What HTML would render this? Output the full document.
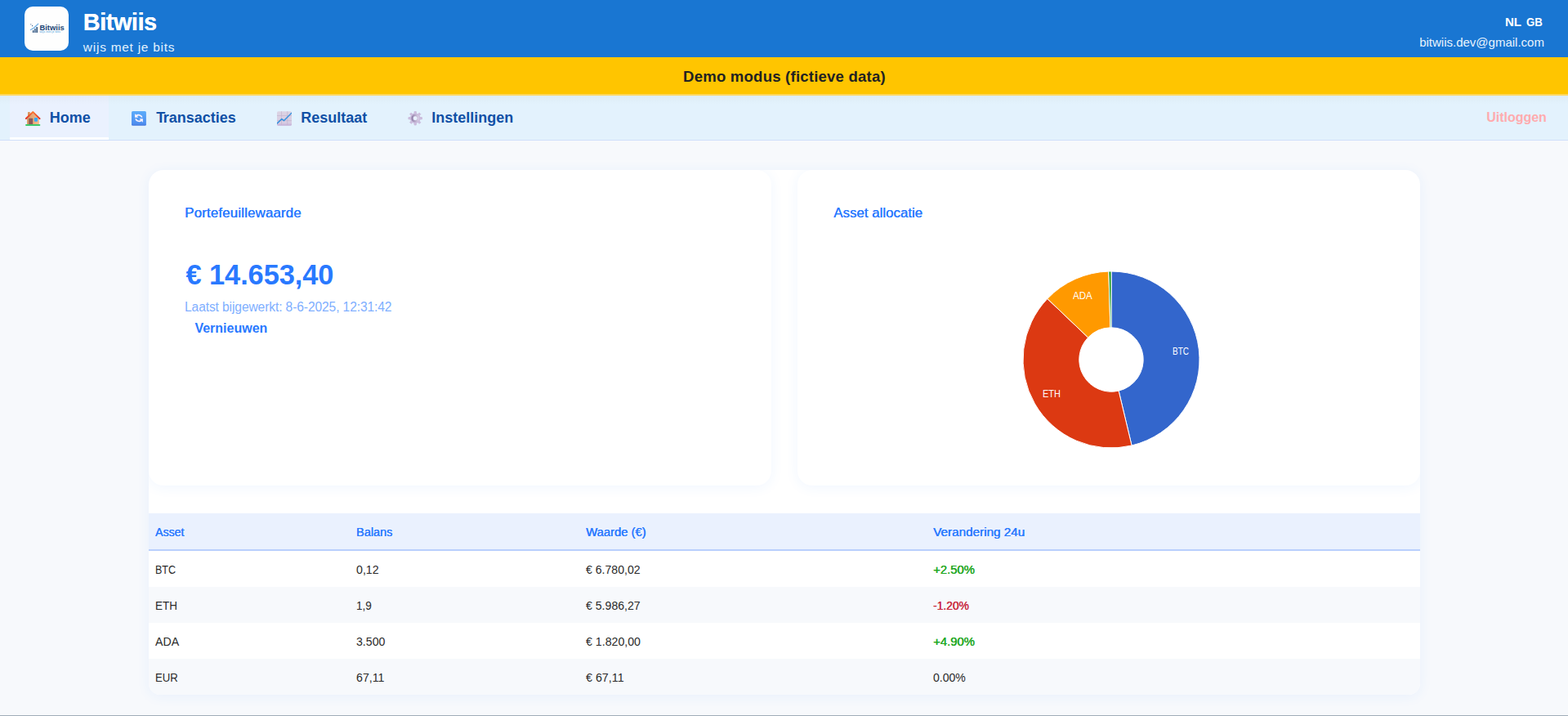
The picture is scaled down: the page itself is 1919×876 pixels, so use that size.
<!DOCTYPE html>
<html lang="nl">
<head>
<meta charset="utf-8">
<title>Bitwiis</title>
<style>
*{box-sizing:border-box}
html,body{margin:0;padding:0}
body{width:1919px;height:876px;overflow:hidden;background:#f7f9fc;font-family:"Liberation Sans",sans-serif;color:#222;position:relative}
.t{position:absolute;white-space:nowrap;line-height:1;margin:0;padding:0}
header{position:absolute;left:0;top:0;width:1919px;height:70px;background:#1976d2}
.logo{position:absolute;left:30px;top:8px;width:54px;height:54px;border-radius:10px;background:#fefefe;overflow:hidden}
.banner{position:absolute;left:0;top:70px;width:1919px;height:47px;background:#ffc500;border-bottom:2px solid #ffd75e}
nav{position:absolute;left:0;top:117px;width:1919px;height:55px;background:#e3f2fd linear-gradient(to bottom,rgba(90,80,40,.03),rgba(90,80,40,0) 11px);border-bottom:1px solid #d0dffa}
nav .active{position:absolute;left:12px;top:0;width:121px;height:54px;background:#eaf1fe linear-gradient(to bottom,rgba(90,80,40,.03),rgba(90,80,40,0) 11px);border-bottom:3px solid #fff}
nav .t{font-weight:bold;font-size:18px;color:#1050a6}
.wrap{position:absolute;left:182px;top:208px;width:1556px;height:642px;background:#fff;border-radius:18px 18px 14px 14px;box-shadow:0 2px 16px rgba(41,121,255,.07);overflow:hidden}
.card{position:absolute;top:0;width:762px;height:386px;background:#fff;border-radius:18px;box-shadow:0 2px 16px rgba(41,121,255,.07)}
.blue{color:#2979ff}
table{position:absolute;left:182px;top:628px;width:1556px;border-collapse:separate;border-spacing:0;table-layout:fixed;font-size:15.5px;border-radius:0 0 14px 14px;overflow:hidden}
th,td{height:44px;padding:14px 0 0 8px;text-align:left;vertical-align:top;line-height:18px;white-space:nowrap}
th{background:#eaf1fe;color:#2979ff;font-weight:normal;border-bottom:2px solid #b9cffd;height:46px}
th:nth-child(1){width:246px}th:nth-child(2){width:281px}th:nth-child(3){width:425px}
td{color:#2a2a2a}
tbody tr:nth-child(even) td{background:#f7f9fc}
.pos{color:#22a722}.neg{color:#c9283e}
.sx{display:inline-block;transform-origin:0 50%}
.pl{font-size:12px;color:#fff}
.sb{text-shadow:.4px 0 0 currentColor}
th,.pos,.neg{text-shadow:.4px 0 0 currentColor}
.ic{position:absolute;top:13px}
.bottomline{position:absolute;left:0;top:875px;width:1919px;height:1px;background:#a0adb8}
</style>
</head>
<body>
<header>
  <div class="logo">
    <svg width="54" height="54" viewBox="30 8 54 54" style="display:block">
      <path d="M37.4,36.5L42.2,33.6L46.7,29.3" fill="none" stroke="#7ab6e8" stroke-width="1.4" stroke-linecap="round"/>
      <rect x="40" y="37.1" width="1.3" height="2.9" fill="#1f4775"/>
      <rect x="42.2" y="35" width="1.4" height="5" fill="#2a5283"/>
      <rect x="44.5" y="33" width="1.4" height="7" fill="#173e6c"/>
      <rect x="37.3" y="29.3" width="1" height="1" fill="#3b5f8c"/>
      <rect x="39" y="31" width="1.1" height="1.1" fill="#2c5282"/>
      <text id="lg1" x="48.5" y="36.7" font-family="Liberation Sans, sans-serif" font-weight="bold" font-size="9.4" fill="#1d4574" textLength="30.2" lengthAdjust="spacingAndGlyphs">Bitwiis</text>
      <text id="lg2" x="48.4" y="40.1" font-family="Liberation Sans, sans-serif" font-weight="bold" font-size="3.3" fill="#7fb8e6" textLength="25.6" lengthAdjust="spacingAndGlyphs">wijs met je bits</text>
    </svg>
  </div>
  <h1 class="t" id="title" style="left:101.77px;top:12.7px;font-size:28.6px;font-weight:bold;color:#fff;letter-spacing:-0.332px;text-shadow:.3px 0 0 #fff">Bitwiis</h1>
  <div class="t" id="sub" style="left:101.86px;top:50px;font-size:15.4px;color:#e3f2fd;letter-spacing:0.772px">wijs met je bits</div>
  <span class="t sx" id="lang1" style="left:1842.3px;top:19.5px;font-size:14.6px;font-weight:bold;color:#fff;transform:scaleX(1.03)">NL</span>
  <span class="t sx" id="lang2" style="left:1868.2px;top:19.5px;font-size:14.6px;font-weight:bold;color:#fff;transform:scaleX(0.905)">GB</span>
  <div class="t" id="email" style="left:1737.16px;top:44px;font-size:15px;color:#e8f3fd">bitwiis.dev@gmail.com</div>
</header>
<div class="banner"><div class="t" id="demo" style="left:836.07px;top:15.2px;font-size:18.6px;font-weight:bold;color:#222;letter-spacing:0.192px">Demo modus (fictieve data)</div></div>
<nav>
  <div class="active"></div>
  <svg class="ic" style="left:26px" width="30" height="30" viewBox="0 0 30 30" aria-hidden="true">
    <defs>
      <linearGradient id="roof" x1="0" y1="0" x2="0" y2="1"><stop offset="0" stop-color="#fb7a2e"/><stop offset="1" stop-color="#de3128"/></linearGradient>
      <linearGradient id="wall" x1="0" y1="0" x2="1" y2="0"><stop offset="0" stop-color="#d99a63"/><stop offset="1" stop-color="#f4bd90"/></linearGradient>
    </defs>
    <rect x="8" y="6.9" width="2.8" height="6" rx=".5" fill="#d8955c"/>
    <path d="M7,15.2L14.4,8.3L21.9,15.2V22H7Z" fill="url(#wall)"/>
    <rect x="9.2" y="14.8" width="5" height="7.1" rx=".5" fill="#8c5b59"/>
    <rect x="15.9" y="14" width="4.1" height="4.8" rx=".8" fill="#35aaf6"/>
    <path d="M5.9,15.1L14.4,7.1L22.6,15.1" fill="none" stroke="url(#roof)" stroke-width="2" stroke-linecap="round" stroke-linejoin="round"/>
    <rect x="5.1" y="21.9" width="18.2" height="2.1" rx=".9" fill="#3dc96b"/>
  </svg>
  <svg class="ic" style="left:155px" width="30" height="30" viewBox="0 0 30 30" aria-hidden="true">
    <defs><linearGradient id="rf" x1="0" y1="0" x2="0" y2="1"><stop offset="0" stop-color="#5cacfa"/><stop offset=".85" stop-color="#4f8ff0"/><stop offset="1" stop-color="#4577dc"/></linearGradient></defs>
    <rect x="6" y="6" width="17.9" height="17.8" rx="1.6" fill="url(#rf)"/>
    <path d="M10,13.7V9.2L11.6,10.6A5.4,5.4 0 0 1 19.6,13.6L17.9,13.7A3.6,3.6 0 0 0 12.9,11.9L14.2,13.7Z" fill="#fbf2fd"/>
    <path d="M19.9,15.2V19.7L18.3,18.3A5.4,5.4 0 0 1 10.2,15.4L11.9,15.3A3.6,3.6 0 0 0 17,17L15.6,15.2Z" fill="#fbf2fd"/>
  </svg>
  <svg class="ic" style="left:333px" width="30" height="30" viewBox="0 0 30 30" aria-hidden="true">
    <defs><linearGradient id="ch" x1="0" y1="0" x2="0" y2="1"><stop offset="0" stop-color="#dbd3e3"/><stop offset=".8" stop-color="#d8cde3"/><stop offset="1" stop-color="#c3add6"/></linearGradient>
    <clipPath id="chc"><rect x="6" y="6.2" width="18" height="17.6" rx="1.6"/></clipPath></defs>
    <rect x="6" y="6.2" width="18" height="17.6" rx="1.6" fill="url(#ch)"/>
    <g clip-path="url(#chc)">
      <path d="M11.5,6V23M18.7,6V23M6,11.5H24M6,17.6H24" stroke="#c4b4cf" stroke-width=".7" fill="none"/>
      <path d="M6.2,20.9L11.8,15.6L14.6,17.6L23.6,8.4" stroke="#3391df" stroke-width="1.5" fill="none" stroke-linecap="round" stroke-linejoin="round"/>
    </g>
  </svg>
  <svg class="ic" style="left:493px" width="30" height="30" viewBox="0 0 30 30" aria-hidden="true">
    <defs><linearGradient id="gr" x1="0" y1="0" x2="1" y2="0"><stop offset="0" stop-color="#9686ad"/><stop offset="1" stop-color="#d6cbe3"/></linearGradient></defs>
    <path d="M13.99,8.93L14.13,6.47L16.27,6.47L16.41,8.93L18.42,9.76L20.26,8.12L21.78,9.64L20.14,11.48L20.97,13.49L23.43,13.63L23.43,15.77L20.97,15.91L20.14,17.92L21.78,19.76L20.26,21.28L18.42,19.64L16.41,20.47L16.27,22.93L14.13,22.93L13.99,20.47L11.98,19.64L10.14,21.28L8.62,19.76L10.26,17.92L9.43,15.91L6.97,15.77L6.97,13.63L9.43,13.49L10.26,11.48L8.62,9.64L10.14,8.12L11.98,9.76Z" fill="#cbbcdd" stroke="#cbbcdd" stroke-width="1" stroke-linejoin="round"/>
    <circle cx="15.2" cy="14.7" r="3.7" fill="none" stroke="url(#gr)" stroke-width="2.4"/>
    <circle cx="15.2" cy="14.7" r="2.4" fill="#e9f1fd"/>
  </svg>

  <a class="t" id="n1" style="left:60.65px;top:18px">Home</a>
  <a class="t" id="n2" style="left:191.2px;top:18px"><span style="letter-spacing:-2.5px">T</span>ransacties</a>
  <a class="t" id="n3" style="left:368.29px;top:18px">Resultaat</a>
  <a class="t" id="n4" style="left:528.27px;top:18px">Instellingen</a>
  <a class="t" id="n5" style="left:1819.14px;top:19.4px;font-size:16px;color:#ffabae">Uitloggen</a>
</nav>
<div class="wrap">
<section class="card" style="left:0">
  <h2 class="t blue sb" id="c1" style="left:44.11px;top:44.6px;font-size:16.8px;font-weight:normal;letter-spacing:0.199px">Portefeuillewaarde</h2>
  <div class="t blue" id="val" style="left:45.48px;top:110.8px;font-size:34.4px;font-weight:bold;letter-spacing:-0.067px">€ 14.653,40</div>
  <div class="t" id="upd" style="left:44.00px;top:159.9px;font-size:15.6px;color:#80afff;letter-spacing:-0.109px">Laatst bijgewerkt: 8-6-2025, 12:31:42</div>
  <button class="t blue" id="btn" style="left:56.38px;top:186.4px;font:bold 16px/1 'Liberation Sans',sans-serif;border:0;background:none">Vernieuwen</button>
</section>
<section class="card" style="left:794px">
  <h2 class="t blue sb" id="c2" style="left:44.22px;top:44.6px;font-size:16.8px;font-weight:normal;letter-spacing:0.037px">Asset allocatie</h2>
  <svg class="pie" style="position:absolute;left:0;top:0" width="762" height="387" viewBox="0 0 762 387">
    <path d="M384.00,124.00A108,108 0 0 1 409.08,337.05L393.10,270.13A39.2,39.2 0 0 0 384.00,192.80Z" fill="#3366cc" stroke="#fff" stroke-width="1"/>
<path d="M409.08,337.05A108,108 0 0 1 305.84,157.47L355.63,204.95A39.2,39.2 0 0 0 393.10,270.13Z" fill="#dc3912" stroke="#fff" stroke-width="1"/>
<path d="M305.84,157.47A108,108 0 0 1 380.89,124.04L382.87,192.82A39.2,39.2 0 0 0 355.63,204.95Z" fill="#ff9900" stroke="#fff" stroke-width="1"/>
<path d="M380.89,124.04A108,108 0 0 1 384.00,124.00L384.00,192.80A39.2,39.2 0 0 0 382.87,192.82Z" fill="#109618" stroke="#fff" stroke-width="1"/>
  </svg>
  <span class="t sx pl" id="p1" style="left:458.58px;top:215.5px;transform:scaleX(0.8320)">BTC</span>
  <span class="t sx pl" id="p2" style="left:300.45px;top:267.5px;transform:scaleX(0.9181)">ETH</span>
  <span class="t sx pl" id="p3" style="left:337.40px;top:147.5px;transform:scaleX(0.9607)">ADA</span>
</section>
</div>
<table>
  <thead><tr><th><span class="sx" id="h1" style="transform:scaleX(0.9085)">Asset</span></th><th><span class="sx" id="h2" style="transform:scaleX(0.9314)">Balans</span></th><th><span class="sx" id="h3" style="transform:scaleX(0.9555)">Waarde (€)</span></th><th><span class="sx" id="h4" style="transform:scaleX(0.9853)">Verandering 24u</span></th></tr></thead>
  <tbody>
    <tr><td><span class="sx" id="r1a" style="transform:scaleX(0.8088)">BTC</span></td><td><span class="sx" id="r1b" style="transform:scaleX(0.9165)">0,12</span></td><td><span class="sx" id="r1c" style="transform:scaleX(0.9092)">€ 6.780,02</span></td><td class="pos"><span class="sx" id="r1d" style="transform:scaleX(0.9572)">+2.50%</span></td></tr>
    <tr><td><span class="sx" id="r2a" style="transform:scaleX(0.8671)">ETH</span></td><td><span class="sx" id="r2b" style="transform:scaleX(0.8763)">1,9</span></td><td><span class="sx" id="r2c" style="transform:scaleX(0.9104)">€ 5.986,27</span></td><td class="neg"><span class="sx" id="r2d" style="transform:scaleX(0.8900)">-1.20%</span></td></tr>
    <tr><td><span class="sx" id="r3a" style="transform:scaleX(0.9131)">ADA</span></td><td><span class="sx" id="r3b" style="transform:scaleX(0.9121)">3.500</span></td><td><span class="sx" id="r3c" style="transform:scaleX(0.9144)">€ 1.820,00</span></td><td class="pos"><span class="sx" id="r3d" style="transform:scaleX(0.9572)">+4.90%</span></td></tr>
    <tr><td><span class="sx" id="r4a" style="transform:scaleX(0.8489)">EUR</span></td><td><span class="sx" id="r4b" style="transform:scaleX(0.9174)">67,11</span></td><td><span class="sx" id="r4c" style="transform:scaleX(0.9210)">€ 67,11</span></td><td><span class="sx" id="r4d" style="transform:scaleX(0.9059)">0.00%</span></td></tr>
  </tbody>
</table>
<div class="bottomline"></div>
</body>
</html>
